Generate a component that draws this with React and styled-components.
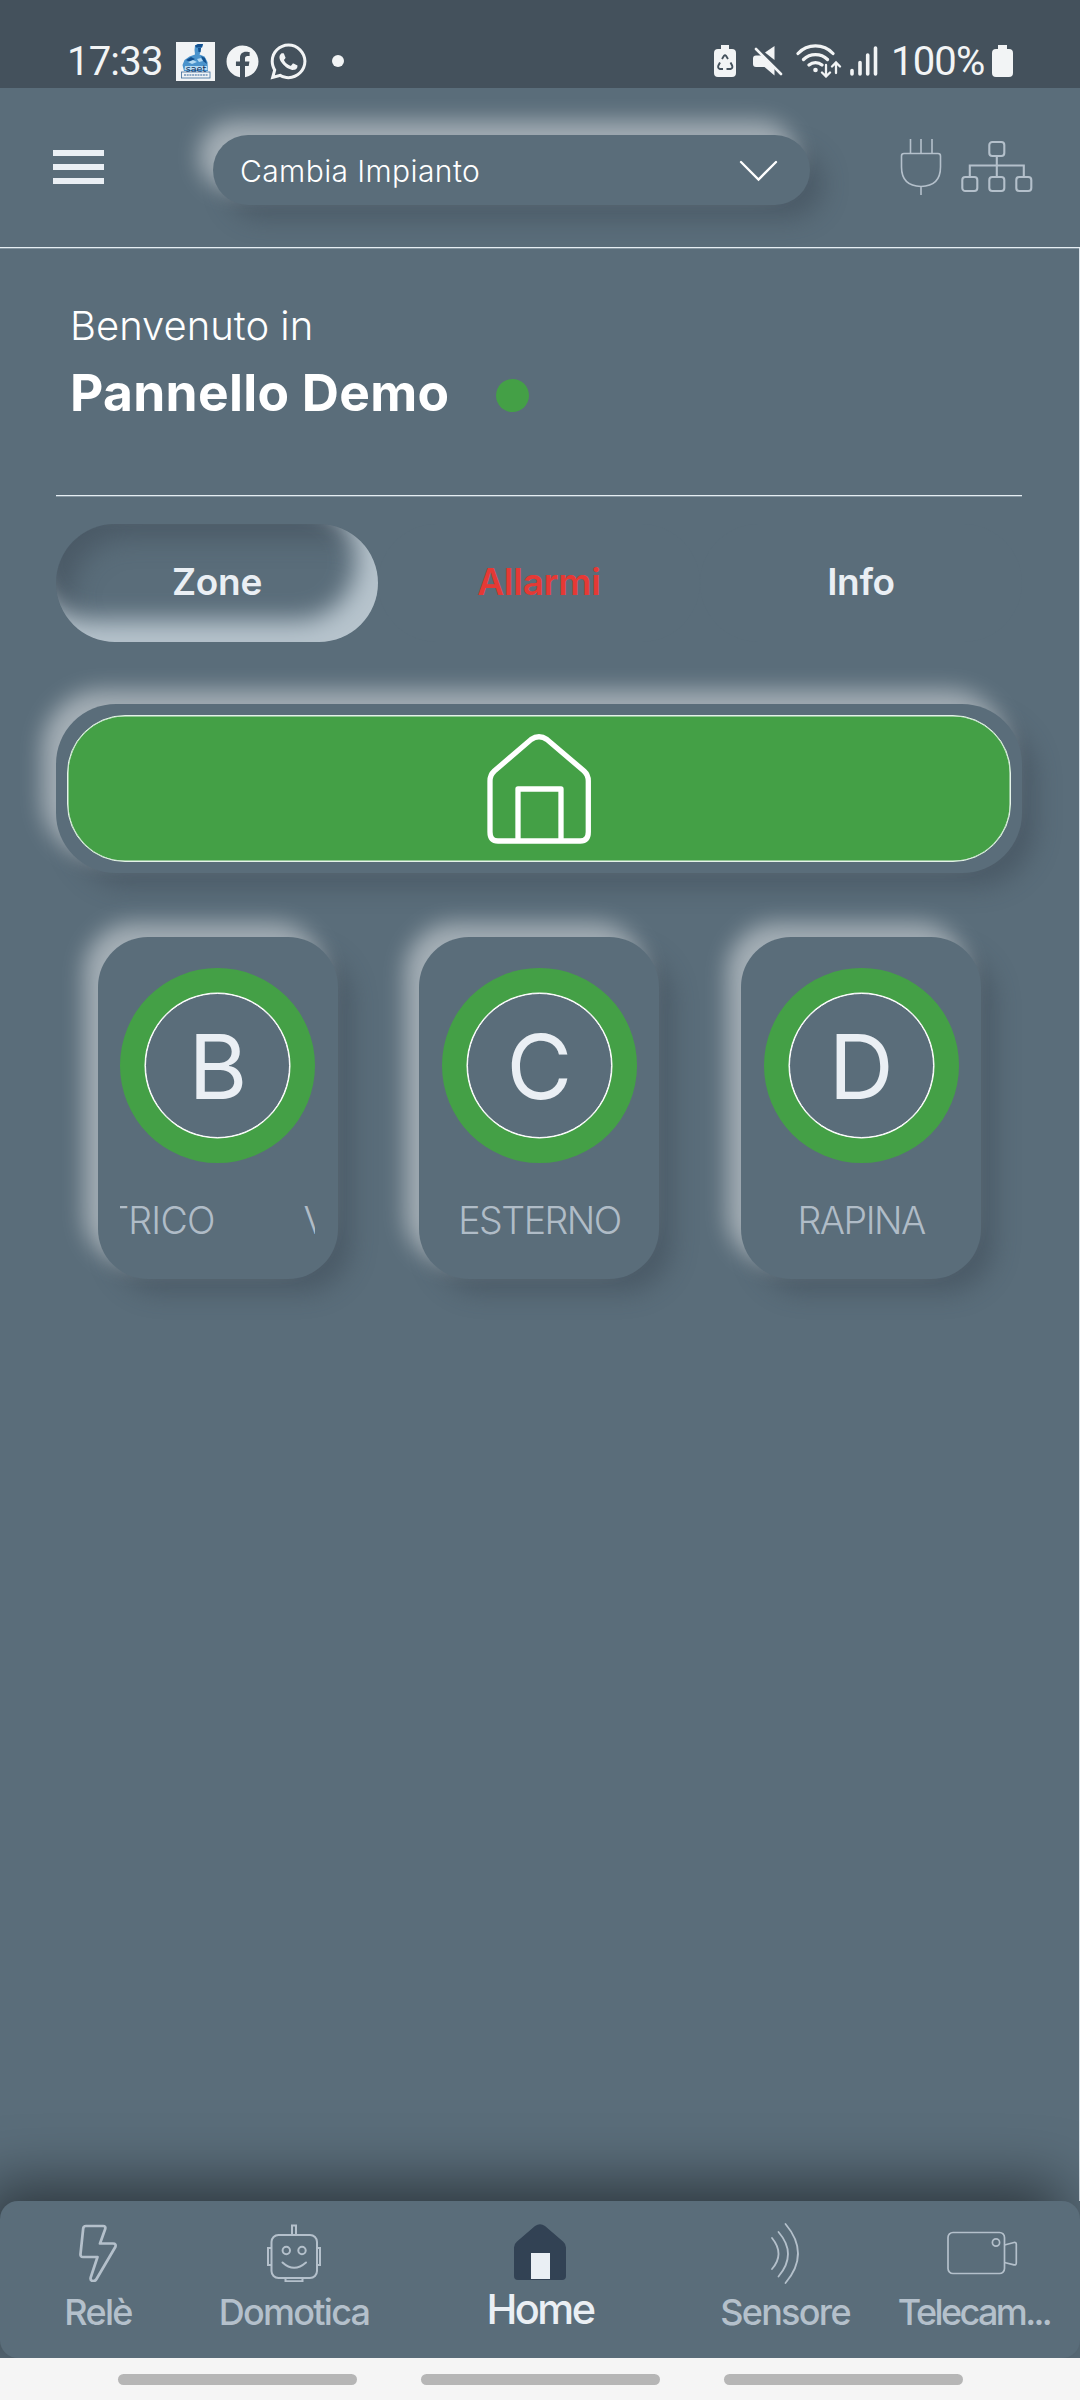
import React from 'react';
import styled, { createGlobalStyle } from 'styled-components';
import { FaFacebook, FaWhatsapp } from 'react-icons/fa';

const bg = '#5a6d7a';
const light = '#eaeff4';
const muted = '#b4c0cb';
const green = '#44a046';

const raised = `
    box-shadow: -14px -14px 22px rgba(255, 255, 255, 0.46), 14px 14px 24px rgba(55, 66, 78, 0.42);
`;

const hairline = `
    border-bottom: 1px solid #e6eef3;
    box-shadow: 0 1px 0 #8495a1;
`;

const GlobalStyle = createGlobalStyle`
    * {
        box-sizing: border-box;
    }
    body {
        margin: 0;
        background-color: ${bg};
        font-family: Inter, 'Noto Sans', sans-serif;
        color: ${light};
    }
    svg {
        display: block;
        flex: none;
    }
`;

const Screen = styled.div`
    display: flex;
    flex-direction: column;
    width: 1080px;
    height: 2400px;
    overflow: hidden;
    background-color: ${bg};
`;

const StatusBar = styled.div`
    display: flex;
    justify-content: space-between;
    height: 88px;
    padding: 34px 67px 0 67px;
    background-color: #44515c;
    font-family: Roboto, sans-serif;
    font-size: 40px;
    color: #f2f4f5;
`;

const StatusGroup = styled.div`
    display: flex;
    align-items: center;
    height: 54px;
`;

const StatusText = styled.span`
    width: ${({ $width }) => $width}px;
    white-space: nowrap;
    letter-spacing: -0.8px;
`;

const StatusIcon = styled.span`
    display: flex;
    margin-left: ${({ $gap }) => $gap}px;
`;

const Dot = styled.span`
    width: ${({ $size }) => $size}px;
    height: ${({ $size }) => $size}px;
    border-radius: 50%;
    margin-left: ${({ $gap }) => $gap}px;
    background-color: ${({ $color }) => $color};
`;

const Header = styled.header`
    display: flex;
    align-items: flex-start;
    height: 160px;
    padding-left: 53px;
    ${hairline}
`;

const Hamburger = styled.button`
    display: flex;
    flex-direction: column;
    gap: 8px;
    width: 51px;
    padding: 0;
    margin-top: 62px;
    border: 0;
    background: none;
`;

const Bar = styled.span`
    height: 6px;
    background-color: ${light};
`;

const Select = styled.div`
    display: flex;
    justify-content: space-between;
    align-items: center;
    width: 597px;
    height: 70px;
    margin: 47px 0 0 109px;
    padding: 1px 32px 0 27px;
    border-radius: 35px;
    font-size: 30px;
    font-weight: 350;
    letter-spacing: 0.4px;
    color: #fff;
    background-color: ${bg};
    ${raised}
`;

const HeaderIcons = styled.div`
    display: flex;
    gap: 19px;
    margin: 50px 0 0 90px;
`;

const Content = styled.main`
    flex: 1;
    padding: 0 57px 0 56px;
    border-right: 1px solid #d8e2e9;
`;

const Welcome = styled.section`
    height: 248px;
    padding: 52px 0 0 14px;
    color: #fff;
    ${hairline}
`;

const Greeting = styled.p`
    margin: 0;
    font-size: 40px;
    line-height: 52px;
    font-weight: 330;
    letter-spacing: 0;
`;

const PanelRow = styled.div`
    display: flex;
    align-items: flex-start;
    margin-top: 8px;
`;

const PanelName = styled.h1`
    margin: 0 48px 0 0;
    width: 378px;
    white-space: nowrap;
    font-size: 51.5px;
    line-height: 64px;
    font-weight: 680;
    letter-spacing: 0.3px;
`;

const OnlineDot = styled(Dot)`
    margin: 19px 0 0;
`;

const Columns = styled.div`
    display: grid;
    grid-template-columns: repeat(3, 1fr);
    justify-items: center;
    margin-top: ${({ $top }) => $top}px;
    padding-left: ${({ $inset }) => $inset || 0}px;
`;

const Tab = styled.button`
    width: 322px;
    height: 118px;
    padding: 0 0 4px;
    border: 0;
    border-radius: 59px;
    background-color: ${bg};
    font-family: inherit;
    font-size: 37px;
    font-weight: 570;
    letter-spacing: -0.3px;
    color: ${({ $alarm }) => ($alarm ? '#e53935' : light)};
    ${({ $active }) => $active && `
        box-shadow: inset -22px -22px 24px #b7c4cd, inset 14px 14px 26px rgba(60, 72, 84, 0.5);
    `}
`;

const MainCard = styled.div`
    height: 169px;
    margin-top: 62px;
    padding: 11px;
    border-radius: 60px;
    background-color: ${bg};
    ${raised}
`;

const ArmButton = styled.div`
    display: flex;
    justify-content: center;
    align-items: center;
    height: 147px;
    border: 1px solid #e4f2e8;
    border-radius: 58px;
    background-color: ${green};
    box-shadow: inset 0 0 0 0.5px #e4f2e8;
`;

const Card = styled.div`
    display: flex;
    flex-direction: column;
    align-items: center;
    width: 240px;
    height: 342px;
    padding-top: 31px;
    border-radius: 50px;
    background-color: ${bg};
    ${raised}
`;

const Ring = styled.div`
    padding: 25px;
    border-radius: 50%;
    background-color: ${green};
`;

const Letter = styled.div`
    width: 145px;
    height: 145px;
    border: 1px solid #fff;
    border-radius: 50%;
    background-color: ${bg};
    box-shadow: 0 0 0 0.5px #fff;
    font-size: 90px;
    line-height: 146px;
    text-align: center;
    color: ${light};
`;

const Label = styled.div`
    display: flex;
    justify-content: ${({ $scroll }) => ($scroll ? 'flex-start' : 'center')};
    gap: 89px;
    width: 195px;
    margin-top: 35px;
    overflow: hidden;
    white-space: nowrap;
    font-size: 37.5px;
    line-height: 46px;
    font-weight: 330;
    letter-spacing: -1.5px;
    color: #b0bcc7;
`;

const Scrolled = styled.span`
    margin-left: -15px;
    letter-spacing: -0.8px;
`;

const BottomNav = styled.nav`
    display: grid;
    grid-template-columns: 196px 196px 296px 194px 184px;
    height: 157px;
    border-radius: 18px;
    background-color: ${bg};
    box-shadow: -16px -16px 60px rgba(0, 0, 0, 0.5);
    z-index: 1;
`;

const NavItem = styled.a`
    display: flex;
    flex-direction: column;
    align-items: center;
    padding-top: 23px;
    white-space: nowrap;
    font-size: ${({ $active }) => ($active ? 41.5 : 36)}px;
    line-height: ${({ $active }) => ($active ? 54 : 60)}px;
    font-weight: 530;
    letter-spacing: ${({ $spacing }) => $spacing || -1.7}px;
    color: ${({ $active }) => ($active ? light : muted)};
`;

const SideIcon = styled.span`
    padding-left: 17px;
`;

const SystemBar = styled.div`
    display: flex;
    justify-content: center;
    align-items: flex-start;
    gap: 64px;
    height: 42px;
    padding-top: 16px;
    background-color: #f5f5f5;
    z-index: 1;
`;

const Handle = styled.span`
    width: 239px;
    height: 11px;
    border-radius: 6px;
    background-color: #b6b6b6;
`;

const AppBadge = () => (
    <svg width="39" height="39" viewBox="0 0 39 39">
        <rect width="39" height="39" fill="#f1f3f5" />
        <path d="M19 3.500l3-1.500h5l-1 3.500h-1l-.5 4.500-1 2.500 5 2 3 5.500.5 9H8l-1.500-6 2-5 5-3.500 5.500-2-.5-4.500z" fill="#4a93cc" />
        <path d="M19 3.500l3-1.500h5l-1 3.500h-6zM22 6h3l-.5 4h-2zM10 18l5-3 4 2-5 3zM25 14l4 2 2 6-4-3z" fill="#12508f" />
        <path d="M12 20l5-2 4 2-5 2zM21 17l4-1 2 3-4 1zM9 24h22l.5 4H8.500z" fill="#b5daf2" />
        <text x="20" y="30" fontSize="9.500" textAnchor="middle" fontFamily="DejaVu Sans" fill="#0f2f5c">saet</text>
        <rect x="5.500" y="30" width="28.500" height="6" fill="#f1f3f5" stroke="#3d6c9c" strokeWidth="0.800" />
        <path d="M8 33h24" stroke="#6f93b8" strokeWidth="1.600" strokeDasharray="2 0.700" />
    </svg>
);

const EcoBattery = () => (
    <svg width="22" height="32" viewBox="0 0 22 32">
        <path d="M7 0h8v4h3a4 4 0 0 1 4 4v20a4 4 0 0 1-4 4H4a4 4 0 0 1-4-4V8a4 4 0 0 1 4-4h3z" fill="#f2f4f5" />
        <path d="M8 14l2-3.200q1-1.300 2 0l2 3.200M16.500 17.500l1.700 3.200q.8 2.800-1.700 3.300h-4M9 24H6q-2.500-.5-1.700-3.300L6 17.500" fill="none" stroke="#44515c" strokeWidth="1.900" />
    </svg>
);

const Muted = () => (
    <svg width="31" height="30" viewBox="0 0 31 30">
        <path d="M21.500 0v14L12 6.500z" fill="#f2f4f5" />
        <path d="M3 9.500h6l12.500 12v8L11.500 21H3a3 3 0 0 1-3-3v-5.500a3 3 0 0 1 3-3z" fill="#f2f4f5" />
        <path d="M5 3l24 24" stroke="#44515c" strokeWidth="3" />
        <path d="M3 3l25 25" stroke="#f2f4f5" strokeWidth="2.600" strokeLinecap="round" />
    </svg>
);

const Wifi = () => (
    <svg width="46" height="34" viewBox="0 0 46 34" fill="none" stroke="#f2f4f5" strokeLinecap="round">
        <path d="M2 9.500a24 24 0 0 1 35 0M7.500 15.500a17 17 0 0 1 24 0M13 21a10 10 0 0 1 13 0" strokeWidth="3.200" />
        <circle cx="19.500" cy="26" r="2.300" fill="#f2f4f5" stroke="none" />
        <path d="M30 21v11M26 28.500l4 4 4-4M40 29V19M36 22.500l4-4 4 4" strokeWidth="2.300" />
    </svg>
);

const Signal = () => (
    <svg width="28" height="30" viewBox="0 0 28 30" stroke="#f2f4f5" strokeWidth="3.600" strokeLinecap="round">
        <path d="M2 24.500v3.500M10 16.500v11.500M17.700 9v19M25.500 2v26" />
    </svg>
);

const Battery = () => (
    <svg width="21" height="32" viewBox="0 0 21 32">
        <path d="M6 0h9v4h2a4 4 0 0 1 4 4v20a4 4 0 0 1-4 4H4a4 4 0 0 1-4-4V8a4 4 0 0 1 4-4h2z" fill="#f2f4f5" />
    </svg>
);

const Chevron = () => (
    <svg width="39" height="22" viewBox="0 0 39 22" fill="none" stroke="#fff" strokeWidth="2.300" strokeLinecap="round">
        <path d="M2 2l17.500 17.500L37 2" />
    </svg>
);

const Plug = () => (
    <svg width="42" height="58" viewBox="0 0 42 58" fill="none" stroke={muted} strokeWidth="1.600">
        <path d="M10.500 1v14M21 1v14M32 1v14M21 48v9M4 15.500h34q2.500 0 2.500 2.500v11q0 19-19.500 19.500Q1.500 48 1.500 29V18q0-2.500 2.500-2.500z" />
    </svg>
);

const Network = () => (
    <svg width="72" height="58" viewBox="0 0 72 58" fill="none" stroke={muted} strokeWidth="2.100">
        <rect x="28.300" y="4" width="15" height="14" rx="3" />
        <rect x="1.300" y="39" width="15" height="14" rx="3" />
        <rect x="28.300" y="39" width="15" height="14" rx="3" />
        <rect x="55.300" y="39" width="15" height="14" rx="3" />
        <path d="M35.800 18v21M8.800 39V27.500h54V39" />
    </svg>
);

const House = () => (
    <svg width="104" height="110" viewBox="0 0 104 110" fill="none" stroke="#fff" strokeWidth="5.300">
        <path d="M44 5.500Q52 0 60 5.500L97 37q4.300 4 4.300 10v51q0 9-8 9H11q-8 0-8-9V47q0-6 4.300-10z" />
        <path d="M31 107V55h43v52" strokeLinejoin="round" />
    </svg>
);

const Bolt = () => (
    <svg width="38" height="58" viewBox="0 0 38 58" fill="none" stroke={muted} strokeWidth="2.700" strokeLinejoin="round">
        <path d="M7 2h17q3 0 2.200 3L21 19.500h13q3.500 0 2.300 3.500L17.500 55q-1.500 2.500-4 2-2.500-.8-1.800-3.500L18.500 33H4q-2.800 0-2.500-3L4.200 4.500Q4.500 2 7 2z" />
    </svg>
);

const Robot = () => (
    <svg width="54" height="58" viewBox="0 0 54 58" fill="none" stroke={muted} strokeWidth="2">
        <rect x="4.500" y="11" width="45.500" height="43" rx="7" />
        <path d="M25 11V1.500h4V11M4.500 24H1v17h3.500M50 24h3v17h-3M18.500 54v3.200h17V54" />
        <circle cx="19.300" cy="26.500" r="3.700" />
        <circle cx="35" cy="26.500" r="3.700" />
        <path d="M15.500 38.500q11.500 10.500 23.500 0" strokeLinecap="round" />
    </svg>
);

const HomeSolid = () => (
    <svg width="54" height="58" viewBox="0 0 54 58">
        <path d="M22 2q5-3.500 10 0l18 15.500q3 2.500 3 6V52q0 4-4 4H5q-4 0-4-4V23.500q0-3.500 3-6z" fill="#324254" />
        <path d="M18 29h19v26H18z" fill={light} />
    </svg>
);

const Waves = () => (
    <svg width="30" height="58" viewBox="0 1 30 58" overflow="visible" fill="none" stroke={muted} strokeWidth="1.800" strokeLinecap="round">
        <path d="M2 15q13 16 0 31M8.500 9q19 22 0 44.500M15.500 1q25 29.500 0 59" />
    </svg>
);

const Camera = () => (
    <svg width="71" height="58" viewBox="0 0 71 58" fill="none" stroke={muted} strokeWidth="1.700">
        <rect x="1" y="8.500" width="56.500" height="41" rx="5" />
        <circle cx="49" cy="18.500" r="3.600" />
        <path d="M57.500 21l9.500-2.500q2.300-.4 2.300 1.800v18.500q0 2.500-2.300 2L57.500 38.500" />
    </svg>
);

const zones = [
    { letter: 'C', name: 'ESTERNO' },
    { letter: 'D', name: 'RAPINA' },
];

const App = () => (
    <Screen>
        <GlobalStyle />
        <StatusBar>
            <StatusGroup>
                <StatusText $width={109}>17:33</StatusText>
                <AppBadge />
                <StatusIcon $gap={11}><FaFacebook size={33} /></StatusIcon>
                <StatusIcon $gap={9}><FaWhatsapp size={41} /></StatusIcon>
                <Dot $size={12} $gap={23} $color="#f2f4f5" />
            </StatusGroup>
            <StatusGroup>
                <EcoBattery />
                <StatusIcon $gap={17}><Muted /></StatusIcon>
                <StatusIcon $gap={12}><Wifi /></StatusIcon>
                <StatusIcon $gap={8}><Signal /></StatusIcon>
                <StatusIcon $gap={13}><StatusText $width={101}>100%</StatusText></StatusIcon>
                <Battery />
            </StatusGroup>
        </StatusBar>
        <Header>
            <Hamburger>
                <Bar />
                <Bar />
                <Bar />
            </Hamburger>
            <Select>
                Cambia Impianto
                <Chevron />
            </Select>
            <HeaderIcons>
                <Plug />
                <Network />
            </HeaderIcons>
        </Header>
        <Content>
            <Welcome>
                <Greeting>Benvenuto in</Greeting>
                <PanelRow>
                    <PanelName>Pannello Demo</PanelName>
                    <OnlineDot $size={33} $color={green} />
                </PanelRow>
            </Welcome>
            <Columns $top={28}>
                <Tab $active>Zone</Tab>
                <Tab $alarm>Allarmi</Tab>
                <Tab>Info</Tab>
            </Columns>
            <MainCard>
                <ArmButton>
                    <House />
                </ArmButton>
            </MainCard>
            <Columns $top={64} $inset={1}>
                <Card>
                    <Ring><Letter>B</Letter></Ring>
                    <Label $scroll>
                        <Scrolled>TRICO</Scrolled>
                        <span>V</span>
                    </Label>
                </Card>
                {zones.map(({ letter, name }) => (
                    <Card key={letter}>
                        <Ring><Letter>{letter}</Letter></Ring>
                        <Label>{name}</Label>
                    </Card>
                ))}
            </Columns>
        </Content>
        <BottomNav>
            <NavItem><Bolt />Relè</NavItem>
            <NavItem><Robot />Domotica</NavItem>
            <NavItem $active $spacing={-2.5}><HomeSolid />Home</NavItem>
            <NavItem><Waves />Sensore</NavItem>
            <NavItem $spacing={-2.6}><SideIcon><Camera /></SideIcon>Telecam...</NavItem>
        </BottomNav>
        <SystemBar>
            <Handle />
            <Handle />
            <Handle />
        </SystemBar>
    </Screen>
);

export default App;
